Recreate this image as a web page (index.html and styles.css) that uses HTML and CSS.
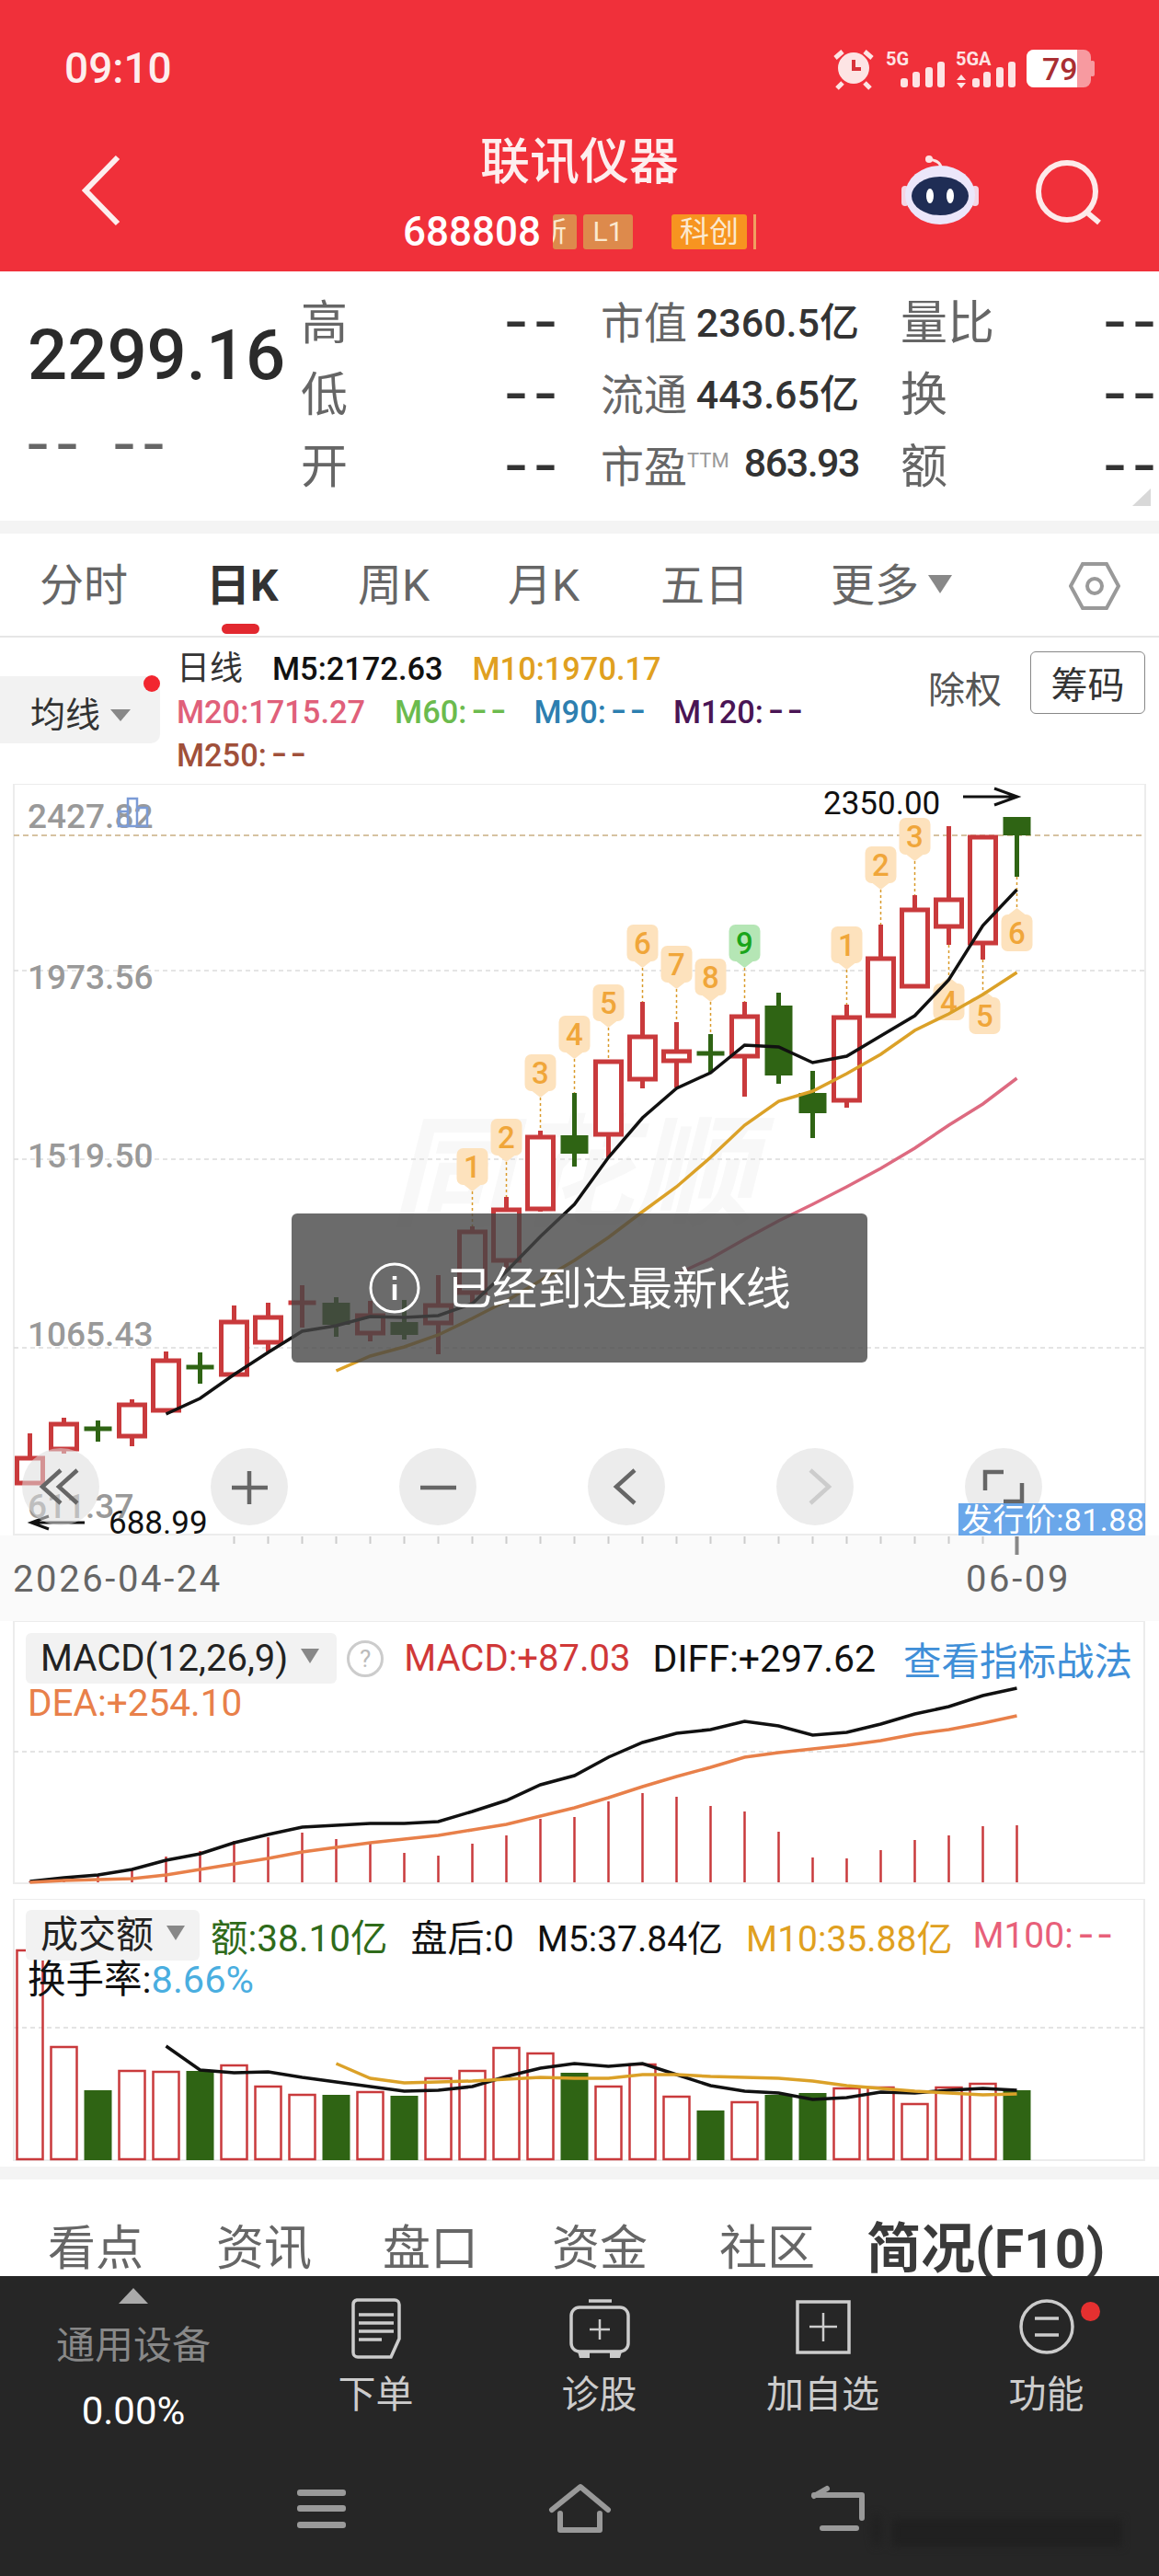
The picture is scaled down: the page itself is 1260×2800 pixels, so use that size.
FILE: index.html
```html
<!DOCTYPE html>
<html lang="zh-CN">

<head>
    <meta charset="UTF-8">
    <title>联讯仪器</title>
    <link rel="stylesheet" href="styles.css">
</head>

<body>
    <header class="top">
        <div class="status">
            <span class="clock">09:10</span>
            <svg class="status-icons" viewBox="900 40 300 70" width="300" height="70">
                <circle class="ic-pale" cx="928" cy="74" r="17"/>
                <path class="ic-line" d="M908 63l8-7M948 63l-8-7M916 90l-6 6M940 90l6 6"/>
                <path class="ic-red" d="M928 65v10h8"/>
                <text class="net" x="963" y="71">5G</text>
                <rect class="ic-pale" x="979" y="85" width="8" height="10" rx="3"/>
                <rect class="ic-pale" x="992" y="78" width="8" height="17" rx="3"/>
                <rect class="ic-pale" x="1006" y="73" width="8" height="22" rx="3"/>
                <rect class="ic-pale" x="1019" y="67" width="8" height="28" rx="3"/>
                <text class="net" x="1039" y="71">5GA</text>
                <path class="ic-pale" d="M1045 81l5 6h-10zM1045 96l5-6h-10z"/>
                <rect class="ic-pale" x="1057" y="85" width="8" height="10" rx="3"/>
                <rect class="ic-pale" x="1069" y="78" width="8" height="17" rx="3"/>
                <rect class="ic-pale" x="1083" y="73" width="8" height="22" rx="3"/>
                <rect class="ic-pale" x="1096" y="67" width="8" height="28" rx="3"/>
                <rect class="bat-back" x="1116" y="54" width="70" height="41" rx="8"/>
                <rect class="bat-back" x="1185" y="66" width="5" height="17" rx="2"/>
                <path class="bat-fill" d="M1124 54h47v41h-47a8 8 0 0 1-8-8v-25a8 8 0 0 1 8-8z"/>
                <text class="bat-num" x="1133" y="87">79</text>
            </svg>
        </div>
        <div class="titlebar">
            <svg class="back" viewBox="0 0 50 80" width="50" height="80">
                <path d="M43 4L8 40l35 36"/>
            </svg>
            <div class="name">
                <h1>联讯仪器</h1>
                <div class="code-row">
                    <span class="code">688808</span>
                    <span class="chip chip-cut">所</span>
                    <span class="chip chip-l1">L1</span>
                    <span class="chip chip-kc">科创</span>
                    <span class="chip-sliver"></span>
                </div>
            </div>
            <svg class="actions" viewBox="975 165 230 85" width="230" height="85">
                <path class="antenna" d="M1010 173c7 1 12 3 13 9"/>
                <circle class="ic-pale" cx="1010" cy="173" r="4"/>
                <rect class="robot-ear" x="980" y="202" width="8" height="22" rx="4"/>
                <rect class="robot-ear" x="1056" y="202" width="8" height="22" rx="4"/>
                <ellipse class="robot-head" cx="1022" cy="212" rx="38" ry="32"/>
                <ellipse class="robot-face" cx="1022" cy="213" rx="31" ry="21"/>
                <ellipse class="robot-eye" cx="1011" cy="213" rx="4" ry="8"/>
                <ellipse class="robot-eye" cx="1033" cy="213" rx="4" ry="8"/>
                <circle class="search" cx="1160" cy="208" r="31"/>
                <path class="search" d="M1183 232l12 10"/>
            </svg>
        </div>
    </header>

    <section class="quote">
        <div class="price-col">
            <div class="price">2299.16</div>
            <div class="change"><span class="dash">--</span><span class="dash">--</span></div>
        </div>
        <div class="q-col col-a">
            <div class="q-row"><span class="lbl big">高</span><span class="dash">--</span></div>
            <div class="q-row"><span class="lbl big">低</span><span class="dash">--</span></div>
            <div class="q-row"><span class="lbl big">开</span><span class="dash">--</span></div>
        </div>
        <div class="q-col col-b">
            <div class="q-row"><span class="lbl">市值</span><b>2360.5亿</b></div>
            <div class="q-row"><span class="lbl">流通</span><b>443.65亿</b></div>
            <div class="q-row"><span class="lbl">市盈<sup>TTM</sup></span><b class="tight">863.93</b></div>
        </div>
        <div class="q-col col-c">
            <div class="q-row"><span class="lbl big">量比</span><span class="dash">--</span></div>
            <div class="q-row"><span class="lbl big">换</span><span class="dash">--</span></div>
            <div class="q-row"><span class="lbl big">额</span><span class="dash">--</span></div>
        </div>
        <span class="corner"></span>
    </section>

    <div class="band"></div>

    <nav class="periods">
        <a>分时</a>
        <a class="on">日K</a>
        <a>周K</a>
        <a>月K</a>
        <a>五日</a>
        <a class="more">更多<i class="tri"></i></a>
        <svg class="hex" viewBox="0 0 56 54" width="56" height="54">
            <path d="M15 3h26l13 24-13 24H15L2 27z"/>
            <circle cx="28" cy="27" r="8"/>
        </svg>
    </nav>

    <section class="legend">
        <div class="ma-chip">均线<i class="tri"></i><span class="dot"></span></div>
        <div class="ma-lines">
            <div class="ma-row"><span class="c-dark big-name">日线</span><span class="c-black">M5:2172.63</span><span class="c-m10">M10:1970.17</span></div>
            <div class="ma-row"><span class="c-m20">M20:1715.27</span><span class="c-m60">M60:<span class="d">--</span></span><span class="c-m90">M90:<span class="d">--</span></span><span class="c-m120">M120:<span class="d">--</span></span></div>
            <div class="ma-row"><span class="c-m250">M250:<span class="d">--</span></span></div>
        </div>
        <div class="adjust">
            <span class="fq">除权</span>
            <button class="chips-btn">筹码</button>
        </div>
    </section>

    <section class="kline">
        <svg id="kchart" class="chart" viewBox="0 852 1260 838" width="1260" height="838">
            <text class="wm" x="424" y="1322">同花顺</text>
            <g id="kgrid"></g>
            <text class="axis" x="30" y="900">2427.82</text>
            <text class="axis" x="30" y="1075">1973.56</text>
            <text class="axis" x="30" y="1269">1519.50</text>
            <text class="axis" x="30" y="1463">1065.43</text>
            <text class="axis" x="30" y="1650">611.37</text>
            <path class="mini" d="M129 882h10v16h-10zM139 868h10v30h-10zM149 878h11v20h-11z"/>
            <g id="kcandles"></g>
            <text class="hl" x="895" y="885">2350.00</text>
            <path class="hl-arrow" d="M1047 866h59M1081 857l25 9-25 9"/>
            <text class="hl" x="118" y="1667">688.99</text>
            <path class="hl-arrow" d="M34 1655h58M53 1648l-19 7 19 7"/>
            <g class="btns">
                <circle cx="66" cy="1616" r="42"/>
                <circle cx="271" cy="1616" r="42"/>
                <circle cx="476" cy="1616" r="42"/>
                <circle cx="681" cy="1616" r="42"/>
                <circle cx="886" cy="1616" r="42"/>
                <circle cx="1091" cy="1616" r="42"/>
            </g>
            <path class="btn-ic" d="M66 1598l-20 18 20 18M84 1598l-20 18 20 18"/>
            <path class="btn-ic" d="M252 1617h39M271 1599v36"/>
            <path class="btn-ic" d="M457 1617h39"/>
            <path class="btn-ic" d="M690 1598l-20 18 20 18"/>
            <path class="btn-ic faint" d="M881 1598l20 18-20 18"/>
            <path class="btn-ic" d="M1071 1620v-20h20M1111 1612v20h-20"/>
            <rect class="issue-bg" x="1042" y="1634" width="203" height="35"/>
            <text class="issue" x="1045" y="1664">发行价:81.88</text>
        </svg>
        <div class="toast">
            <svg viewBox="0 0 56 56" width="56" height="56">
                <circle cx="28" cy="28" r="26"/>
                <path d="M28 24v17M28 15v4"/>
            </svg>
            <span>已经到达最新K线</span>
        </div>
    </section>

    <div class="dates"><span>2026-04-24</span><span>06-09</span></div>

    <section class="panel macd">
        <svg id="mchart" class="chart under" viewBox="0 1762 1260 286" width="1260" height="286"></svg>
        <div class="p-row">
            <div class="p-chip">MACD(12,26,9)<i class="tri"></i></div>
            <span class="help">?</span>
            <span class="c-red m1">MACD:+87.03</span>
            <span class="c-black m2">DIFF:+297.62</span>
            <a class="c-blue m3">查看指标战法</a>
        </div>
        <div class="p-line c-dea">DEA:+254.10</div>
    </section>

    <section class="panel vol">
        <svg id="vchart" class="chart under" viewBox="0 2064 1260 285" width="1260" height="285"></svg>
        <div class="p-row">
            <div class="p-chip">成交额<i class="tri"></i></div>
            <span class="c-green v1">额:38.10亿</span>
            <span class="c-black v2">盘后:0</span>
            <span class="c-black v2 small">M5:37.84亿</span>
            <span class="c-m10 v2 small">M10:35.88亿</span>
            <span class="c-m100 v3 small">M100:<span class="d">--</span></span>
        </div>
        <div class="p-line turnover c-black">换手率:<span class="c-sky">8.66%</span></div>
    </section>

    <div class="band band2"></div>

    <nav class="details">
        <a>看点</a>
        <a>资讯</a>
        <a>盘口</a>
        <a>资金</a>
        <a>社区</a>
        <a class="on">简况(F10)</a>
    </nav>

    <footer class="dock">
        <div class="dock-row">
            <div class="sector">
                <i class="up"></i>
                <span class="sector-name">通用设备</span>
                <span class="sector-pct">0.00%</span>
            </div>
            <div class="tool">
                <svg viewBox="0 0 56 66" width="56" height="66">
                    <path d="M7 2h41a5 5 0 0 1 5 5v37l-9 20H8a5 5 0 0 1-5-5V7a5 5 0 0 1 4-5z"/>
                    <path d="M9 18h38M9 27h38M9 36h38M9 45h25"/>
                </svg>
                <span>下单</span>
            </div>
            <div class="tool">
                <svg viewBox="0 0 66 66" width="66" height="66">
                    <path d="M21 3h25"/>
                    <rect x="2" y="10" width="62" height="48" rx="9"/>
                    <path class="thin" d="M33 23v22M22 34h22"/>
                    <path class="feet" d="M9 58h13v7H11zM44 58h13l-2 7H44z"/>
                </svg>
                <span>诊股</span>
            </div>
            <div class="tool">
                <svg viewBox="0 0 60 66" width="60" height="66">
                    <rect x="2" y="4" width="56" height="55"/>
                    <path class="thin" d="M30 16v31M15 31h30"/>
                </svg>
                <span>加自选</span>
            </div>
            <div class="tool">
                <svg viewBox="0 0 60 66" width="60" height="66">
                    <circle cx="30" cy="31" r="28"/>
                    <path d="M17 22h26M17 40h26"/>
                </svg>
                <span>功能</span>
                <i class="red-dot"></i>
            </div>
        </div>
        <svg class="sysbar" viewBox="0 2690 1260 110" width="1260" height="110">
            <rect x="323" y="2706" width="53" height="7" rx="3"/>
            <rect x="323" y="2723" width="53" height="7" rx="3"/>
            <rect x="323" y="2741" width="53" height="7" rx="3"/>
            <path d="M600 2728l31-25 30 25M609 2732v18h43v-18"/>
            <path d="M899 2705l-14 8M885 2712h52v25M894 2748h37"/>
            <g class="smudge">
                <ellipse cx="953" cy="2750" rx="5" ry="18"/>
                <rect x="970" y="2738" width="250" height="30"/>
            </g>
        </svg>
    </footer>

    <script src="script.js"></script>
</body>

</html>
```

FILE: styles.css
```css
* {
    margin: 0;
    box-sizing: border-box;
}

body {
    width: 1260px;
    overflow-x: hidden;
    background: #fff;
    font-family: Roboto, "Noto Sans CJK SC", sans-serif;
    color: #333;
}

/* header */

.top {
    height: 295px;
    background: #f0303a;
    color: #fff;
}

.status {
    height: 130px;
    display: flex;
    justify-content: space-between;
    padding: 40px 60px 0 70px;
}

.clock {
    font-size: 46px;
    font-weight: 500;
    line-height: 54px;
    margin-top: 7px;
    color: #fdeeee;
}

.ic-pale {
    fill: #fde4e4;
}

.ic-line {
    fill: none;
    stroke: #fde4e4;
    stroke-width: 5;
}

.ic-red {
    fill: none;
    stroke: #d8333a;
    stroke-width: 4;
}

.net {
    font-size: 20px;
    font-weight: 700;
    fill: #fde4e4;
}

.bat-back {
    fill: #f79aa0;
}

.bat-fill {
    fill: #fff;
}

.bat-num {
    font-size: 34px;
    font-weight: 500;
    fill: #a92e32;
}

.titlebar {
    height: 165px;
    display: flex;
    position: relative;
    justify-content: center;
}

.back {
    position: absolute;
    left: 85px;
    top: 37px;
    fill: none;
    stroke: #fdeeee;
    stroke-width: 6;
}

.actions {
    position: absolute;
    left: 975px;
    top: 35px;
}

.antenna {
    fill: none;
    stroke: #fde4e4;
    stroke-width: 3;
}

.robot-ear {
    fill: #f4d5e4;
}

.robot-head {
    fill: #ebe6fa;
}

.robot-face {
    fill: #1f2d55;
}

.robot-eye {
    fill: #fff;
}

.search {
    fill: none;
    stroke: #fdeaea;
    stroke-width: 6;
}

.name {
    text-align: center;
}

h1 {
    font-size: 54px;
    font-weight: 500;
    line-height: 72px;
    margin-top: 11px;
    color: #fdeeee;
}

.code-row {
    display: flex;
    align-items: center;
    margin-top: 19px;
}

.code {
    font-size: 44px;
    font-weight: 500;
    line-height: 40px;
    width: 163px;
    text-align: left;
}

.chip {
    height: 38px;
    line-height: 38px;
    border-radius: 3px;
    text-align: center;
    color: #fbe9d0;
    overflow: hidden;
}

.chip-cut {
    width: 26px;
    background: #dd8a4c;
    font-size: 30px;
    text-align: left;
    text-indent: -15px;
}

.chip-l1 {
    width: 54px;
    margin-left: 7px;
    background: #dd8a4c;
    font-size: 30px;
}

.chip-kc {
    width: 82px;
    margin-left: 42px;
    background: #f79420;
    font-size: 32px;
}

.chip-sliver {
    width: 3px;
    height: 38px;
    margin-left: 7px;
    background: #f0a060;
}

/* quote block */

.quote {
    height: 271px;
    display: flex;
    position: relative;
    padding-top: 13px;
    overflow: hidden;
}

.price-col {
    width: 327px;
    flex: none;
    padding-left: 30px;
}

.price {
    font-size: 76px;
    font-weight: 500;
    line-height: 90px;
    margin-top: 33px;
    color: #2b2b2b;
}

.change {
    display: flex;
    gap: 30px;
    margin: 12px 0 0 -10px;
}

.dash {
    font-family: "Liberation Mono", monospace;
    font-size: 70px;
    line-height: 62px;
    letter-spacing: -10px;
    padding-top: 12px;
    color: #333;
    white-space: nowrap;
}

.change .dash {
    color: #666;
}

.q-row {
    height: 78px;
    display: flex;
    align-items: center;
    justify-content: space-between;
}

.col-a {
    width: 277px;
    flex: none;
}

.col-b {
    width: 281px;
    flex: none;
    margin-left: 49px;
}

.col-c {
    width: 276px;
    flex: none;
    margin-left: 45px;
}

.lbl {
    font-size: 47px;
    color: #666;
}

.lbl.big {
    font-size: 51px;
}

.lbl sup {
    font-size: 22px;
    color: #999;
    vertical-align: 16px;
    line-height: 0;
}

.q-row b {
    font-size: 43px;
    font-weight: 500;
    color: #333;
}

.q-row b.tight {
    letter-spacing: -1.5px;
}

.corner {
    position: absolute;
    left: 1231px;
    top: 236px;
    border-bottom: 19px solid #d8d8d8;
    border-left: 20px solid transparent;
}

.band {
    height: 14px;
    background: #f4f4f4;
}

/* period tabs */

.periods {
    height: 113px;
    display: grid;
    grid-template-columns: 181px 165px 163px 166px 185px 259px auto;
    align-items: center;
    padding: 3px 0 0 43px;
    border-bottom: 2px solid #e6e6e6;
    position: relative;
    font-size: 48px;
    color: #666;
}

.periods a {
    line-height: 60px;
}

.periods .on {
    font-weight: 700;
    color: #333;
    position: relative;
}

.periods .on::after {
    content: "";
    position: absolute;
    left: 17px;
    top: 71px;
    width: 41px;
    height: 11px;
    border-radius: 6px;
    background: #e2282f;
}

.tri {
    display: inline-block;
    border-left: 13px solid transparent;
    border-right: 13px solid transparent;
    border-top: 20px solid #888;
    margin-left: 10px;
    vertical-align: 8px;
}

.hex {
    fill: none;
    stroke: #999;
    stroke-width: 4;
}

/* ma legend */

.legend {
    height: 159px;
    display: flex;
    align-items: flex-start;
}

.ma-chip {
    width: 174px;
    height: 73px;
    margin-top: 42px;
    padding: 6px 0 0 33px;
    line-height: 73px;
    font-size: 38px;
    color: #333;
    background: #f2f2f2;
    border-radius: 0 10px 10px 0;
    position: relative;
}

.ma-chip .tri {
    border-left-width: 11px;
    border-right-width: 11px;
    border-top-width: 13px;
    margin-left: 11px;
    vertical-align: 6px;
}

.dot {
    position: absolute;
    right: 0;
    top: -1px;
    width: 18px;
    height: 18px;
    border-radius: 50%;
    background: #f2262f;
}

.ma-lines {
    margin-left: 18px;
    padding-top: 11px;
    font-size: 34.4px;
    font-weight: 500;
}

.ma-row {
    display: flex;
    gap: 32px;
    height: 47px;
    line-height: 47px;
}

.big-name {
    font-size: 36px;
    font-weight: 400;
}

.d {
    font-family: "Liberation Mono", monospace;
    font-size: 46px;
    letter-spacing: -7px;
    line-height: 0;
}

.c-dark { color: #333; }
.c-black { color: #111; }
.c-m10 { color: #e0a020; }
.c-m20 { color: #e0607a; }
.c-m60 { color: #6cbb4e; }
.c-m90 { color: #2d7fb0; }
.c-m120 { color: #4a1555; }
.c-m250 { color: #a0503a; }
.c-m100 { color: #e8607a; }
.c-red { color: #d03838; }
.c-blue { color: #3f8fd8; }
.c-dea { color: #e8804a; }
.c-green { color: #2f6b1a; }
.c-sky { color: #4aaee0; }

.adjust {
    margin-left: auto;
    margin-right: 15px;
    margin-top: 15px;
    display: flex;
    align-items: center;
    gap: 31px;
}

.fq {
    font-size: 40px;
    color: #555;
    padding-top: 10px;
}

.chips-btn {
    width: 125px;
    height: 68px;
    background: #fff;
    border: 1px solid #888;
    border-radius: 6px;
    font-family: inherit;
    font-size: 40px;
    color: #333;
    padding: 0;
}

/* candle chart */

.kline {
    position: relative;
    height: 838px;
}

.chart {
    display: block;
}

.wm {
    font-size: 132px;
    font-weight: 700;
    font-style: italic;
    fill: #f8f8f8;
}

.frame {
    fill: none;
    stroke: #ececec;
    stroke-width: 2;
}

.tickband {
    fill: #fafafa;
}

.grid {
    stroke: #dcdcdc;
    stroke-width: 1.5;
    stroke-dasharray: 5 4;
}

.grid-top {
    stroke: #c9ae82;
    stroke-width: 1.5;
    stroke-dasharray: 6 4;
}

.axis {
    font-size: 37px;
    font-weight: 500;
    fill: #999;
}

.mini {
    fill: none;
    stroke: #7b9bd6;
    stroke-width: 2.5;
}

.body-up {
    fill: #fff;
    stroke: #c93a3c;
    stroke-width: 5;
}

.wick-up {
    stroke: #c93a3c;
    stroke-width: 5;
}

.body-down {
    fill: #2f6414;
}

.wick-down {
    stroke: #2f6414;
    stroke-width: 5;
}

.ma5 {
    fill: none;
    stroke: #111;
    stroke-width: 3.5;
}

.ma10 {
    fill: none;
    stroke: #dba128;
    stroke-width: 3.5;
}

.ma20 {
    fill: none;
    stroke: #dd6a80;
    stroke-width: 3.5;
}

.td-line {
    stroke: #d99a2b;
    stroke-width: 1.5;
    stroke-dasharray: 3 3;
}

.td {
    fill: #fde2bd;
}

.td-num {
    font-size: 33px;
    font-weight: 500;
    fill: #f0a63a;
    text-anchor: middle;
}

.td.green {
    fill: #b5e6b5;
}

.td-num.green {
    fill: #1aa51a;
}

.hl {
    font-size: 35px;
    fill: #111;
}

.hl-arrow {
    fill: none;
    stroke: #111;
    stroke-width: 3;
}

.btns {
    fill: #dcdcdc;
    fill-opacity: .55;
}

.btn-ic {
    fill: none;
    stroke: #666;
    stroke-width: 4.5;
}

.btn-ic.faint {
    stroke: #ccc;
}

.issue-bg {
    fill: #5d9fe8;
    fill-opacity: .92;
}

.issue {
    font-size: 34px;
    letter-spacing: .4px;
    fill: #fff;
}

.tick {
    stroke: #ccc;
    stroke-width: 2;
}

.tick-last {
    stroke: #888;
    stroke-width: 4;
}

.toast {
    position: absolute;
    left: 317px;
    top: 467px;
    width: 626px;
    height: 162px;
    display: flex;
    align-items: center;
    gap: 29px;
    padding-left: 84px;
    background: rgba(70, 70, 70, .8);
    border-radius: 6px;
    font-size: 49px;
    color: #fff;
}

.toast span {
    margin-top: -8px;
}

.toast svg {
    fill: none;
    stroke: #fff;
    stroke-width: 3;
}

.toast path {
    stroke-width: 4.5;
}

.dates {
    height: 72px;
    display: flex;
    justify-content: space-between;
    padding: 0 96px 18px 14px;
    background: #fafafa;
    font-size: 40px;
    letter-spacing: 2.6px;
    line-height: 54px;
    color: #666;
}

/* indicator panels */

.panel {
    position: relative;
    font-size: 40px;
}

.macd {
    height: 285px;
    padding-top: 13px;
}

.vol {
    height: 284px;
    padding-top: 12px;
    margin-top: 17px;
}

.under {
    position: absolute;
    left: 0;
    top: 0;
}

.p-row {
    position: relative;
    display: flex;
    align-items: center;
    height: 55px;
    padding: 0 29px 0 28px;
    white-space: nowrap;
}

.p-chip {
    height: 55px;
    line-height: 55px;
    padding-left: 16px;
    padding-right: 16px;
    background: #f2f2f2;
    border-radius: 6px;
    font-size: 41px;
    color: #222;
}

.macd .p-chip {
    font-size: 40px;
    padding-right: 19px;
}

.p-chip .tri {
    border-left-width: 10px;
    border-right-width: 10px;
    border-top-width: 16px;
    margin-left: 14px;
    vertical-align: 8px;
}

.help {
    width: 40px;
    height: 40px;
    margin-left: 11px;
    border: 3px solid #ccc;
    border-radius: 50%;
    text-align: center;
    font-size: 26px;
    line-height: 34px;
    color: #bbb;
}

.m1 { margin-left: 22px; }
.m2 { margin-left: 24px; font-size: 41px; }
.m3 { margin-left: auto; font-size: 41.5px; }
.v1 { margin-left: 12px; font-size: 40.5px; }
.v2 { margin-left: 25px; }
.v3 { margin-left: 22px; }
.small { font-size: 39px; }

.p-line {
    position: relative;
    height: 42px;
    line-height: 42px;
    padding-left: 30px;
    white-space: nowrap;
}

.macd .p-line {
    font-size: 40.5px;
}

.turnover {
    font-size: 41.5px;
}

.band2 {
    margin-top: 7px;
}

/* detail tabs */

.details {
    height: 105px;
    display: grid;
    grid-template-columns: 183px 181px 184px 182px 160px auto;
    padding: 44px 0 0 52px;
    overflow: hidden;
    font-size: 52px;
    line-height: 64px;
    color: #666;
}

.details .on {
    font-size: 59px;
    font-weight: 700;
    color: #3a3a3a;
    white-space: nowrap;
}

/* bottom dock */

.dock {
    height: 326px;
    background: #262626;
}

.dock-row {
    height: 216px;
    display: grid;
    grid-template-columns: 287px repeat(4, 243px);
}

.sector {
    display: flex;
    flex-direction: column;
    align-items: center;
    width: 290px;
}

.up {
    margin-top: 13px;
    border-left: 16px solid transparent;
    border-right: 16px solid transparent;
    border-bottom: 17px solid #aaa;
}

.sector-name {
    margin-top: 21px;
    font-size: 42px;
    line-height: 50px;
    color: #888;
}

.sector-pct {
    margin-top: 20px;
    font-size: 42px;
    line-height: 52px;
    color: #fff;
}

.tool {
    position: relative;
    display: flex;
    flex-direction: column;
    align-items: center;
    padding-top: 24px;
    font-size: 41px;
    line-height: 48px;
    color: #ccc;
}

.tool svg {
    fill: none;
    stroke: #ccc;
    stroke-width: 3.5;
    margin-bottom: 15px;
}

.tool svg .thin {
    stroke-width: 2.5;
}

.tool svg .feet {
    fill: #ccc;
    stroke: none;
}

.red-dot {
    position: absolute;
    left: 159px;
    top: 28px;
    width: 21px;
    height: 21px;
    border-radius: 50%;
    background: #e53030;
}

.sysbar {
    display: block;
    fill: #999;
}

.sysbar path {
    fill: none;
    stroke: #999;
    stroke-width: 6;
    stroke-linecap: round;
    stroke-linejoin: round;
}

.smudge {
    fill: #202020;
    filter: blur(4px);
}
```

FILE: script.js
```js
const NS = "http://www.w3.org/2000/svg";
const x = i => 32.5 + 37 * i;

function el(parent, name, attrs, text) {
    const node = document.createElementNS(NS, name);
    for (const key in attrs) node.setAttribute(key, attrs[key]);
    if (text) node.textContent = text;
    parent.appendChild(node);
    return node;
}

function polyline(parent, cls, start, ys) {
    const pts = ys.map((y, n) => `${x(start + n)},${y}`).join(" ");
    el(parent, "polyline", { class: cls, points: pts });
}

// top, bottom, wick top, wick bottom, u = red / d = green / + = cross
const candles = [
    [1585, 1612, 1558, 1612, "u"], [1548, 1575, 1541, 1580, "u"], [1553, 1553, 1544, 1567, "d+"],
    [1527, 1561, 1521, 1572, "u"], [1479, 1533, 1469, 1533, "u"], [1486, 1486, 1470, 1504, "d+"],
    [1437, 1494, 1419, 1494, "u"], [1432, 1459, 1416, 1469, "u"], [1416, 1416, 1397, 1443, "u+"],
    [1416, 1440, 1410, 1453, "d"], [1430, 1449, 1414, 1458, "u"], [1437, 1451, 1413, 1456, "d"],
    [1419, 1438, 1386, 1472, "u"], [1339, 1405, 1333, 1417, "u"], [1315, 1370, 1301, 1382, "u"],
    [1236, 1314, 1229, 1317, "u"], [1234, 1254, 1188, 1268, "d"], [1154, 1233, 1154, 1258, "u"],
    [1127, 1173, 1089, 1183, "u"], [1143, 1153, 1111, 1182, "u"], [1145, 1145, 1124, 1166, "d+"],
    [1105, 1148, 1089, 1192, "u"], [1093, 1169, 1079, 1178, "d"], [1188, 1210, 1164, 1237, "d"],
    [1106, 1196, 1092, 1204, "u"], [1042, 1104, 1005, 1104, "u"], [989, 1072, 973, 1072, "u"],
    [978, 1007, 898, 1027, "u"], [910, 1025, 910, 1043, "u"], [888, 908, 908, 953, "d"]
];

const ma5 = [1537, 1520, 1494, 1470, 1447, 1441, 1431, 1432, 1430, 1417, 1382, 1344, 1309, 1258, 1215, 1183, 1166, 1136, 1138, 1155, 1148, 1126, 1104, 1065, 1006, 967];
const ma10 = [1490, 1474, 1464, 1451, 1433, 1414, 1392, 1370, 1345, 1317, 1290, 1258, 1223, 1197, 1186, 1167, 1146, 1120, 1102, 1081, 1057];
const ma20 = [1385, 1368, 1347, 1327, 1309, 1290, 1270, 1248, 1223, 1200, 1172];

// candle, centre y, number; marks on the last candles hang below
const marks = [
    [13, 1268, 1], [14, 1236, 2], [15, 1166, 3], [16, 1124, 4], [17, 1090, 5], [18, 1025, 6],
    [19, 1048, 7], [20, 1062, 8], [21, 1025, 9], [24, 1027, 1], [25, 940, 2], [26, 909, 3],
    [27, 1089, 4, true], [28, 1104, 5, true], [29, 1014, 6, true]
];

function drawKline() {
    const grid = document.querySelector("#kgrid");
    el(grid, "rect", { class: "frame", x: 15, y: 852, width: 1230, height: 816 });
    el(grid, "rect", { class: "tickband", x: 0, y: 1669, width: 1260, height: 21 });
    [1055, 1260, 1465].forEach(y => el(grid, "line", { class: "grid", x1: 15, x2: 1245, y1: y, y2: y }));
    el(grid, "line", { class: "grid-top", x1: 15, x2: 1245, y1: 908, y2: 908 });
    for (let i = 6; i < 29; i++) {
        el(grid, "line", { class: "tick", x1: x(i), x2: x(i), y1: 1670, y2: 1678 });
    }
    el(grid, "line", { class: "tick-last", x1: x(29), x2: x(29), y1: 1670, y2: 1690 });

    const g = document.querySelector("#kcandles");

    marks.forEach(([i, cy, n, below]) => {
        const c = candles[i];
        const green = n == 9 ? " green" : "";
        const y1 = below ? c[3] : cy + 27;
        const y2 = below ? cy - 20 : c[2];
        el(g, "line", { class: "td-line", x1: x(i), x2: x(i), y1: y1, y2: y2 });
        const mx = x(i) + (i == 28 ? 2 : 0);
        const tip = below ? cy - 27 : cy + 27;
        const edge = below ? cy - 20 : cy + 20;
        el(g, "rect", { class: "td" + green, x: mx - 17, y: cy - 20, width: 34, height: 40, rx: 7 });
        el(g, "path", { class: "td" + green, d: `M${mx - 9} ${edge}L${mx} ${tip}L${mx + 9} ${edge}z` });
        el(g, "text", { class: "td-num" + green, x: mx, y: cy + 12 }, String(n));
    });

    candles.forEach((c, i) => {
        const up = c[4][0] == "u";
        const cross = c[4][1] == "+";
        el(g, "line", { class: up ? "wick-up" : "wick-down", x1: x(i), x2: x(i), y1: c[2], y2: c[3] });
        if (cross) {
            el(g, "line", { class: up ? "wick-up" : "wick-down", x1: x(i) - 15, x2: x(i) + 15, y1: c[0], y2: c[0] });
        } else if (up) {
            el(g, "rect", { class: "body-up", x: x(i) - 14, y: c[0], width: 28, height: c[1] - c[0] });
        } else {
            el(g, "rect", { class: "body-down", x: x(i) - 15, y: c[0], width: 30, height: c[1] - c[0] });
        }
    });

    polyline(g, "ma20", 19, ma20);
    polyline(g, "ma10", 9, ma10);
    polyline(g, "ma5", 4, ma5);
}

const bars = [2045, 2044, 2037, 2031, 2018, 2012, 2001, 1997, 1992, 1999, 2003, 2014, 2017, 2004, 1995, 1977, 1975, 1958, 1949, 1953, 1963, 1969, 1991, 2019, 2020, 2011, 2000, 1995, 1985, 1984];
const diff = [2045, 2041, 2038, 2032, 2022, 2015, 2003, 1994, 1986, 1984, 1982, 1982, 1980, 1969, 1957, 1940, 1930, 1910, 1894, 1884, 1880, 1871, 1876, 1886, 1883, 1874, 1863, 1855, 1843, 1835];
const dea = [2046, 2044, 2043, 2042, 2038, 2032, 2026, 2020, 2013, 2008, 2003, 1999, 1995, 1989, 1983, 1974, 1965, 1954, 1942, 1931, 1921, 1910, 1905, 1901, 1897, 1892, 1885, 1880, 1873, 1865];

function drawMacd() {
    const g = document.querySelector("#mchart");
    el(g, "rect", { class: "frame", x: 15, y: 1762, width: 1229, height: 285 });
    el(g, "line", { class: "grid", x1: 15, x2: 1244, y1: 1904, y2: 1904 });
    bars.forEach((y, i) => el(g, "line", { class: "wick-up", x1: x(i), x2: x(i), y1: y, y2: 2046, style: "stroke-width:2.5" }));
    polyline(g, "ma5", 0, diff);
    el(g, "polyline", { class: "ma10", style: "stroke:#e8804a", points: dea.map((y, i) => `${x(i)},${y}`).join(" ") });
}

// top of bar, g = green
const volume = [
    [2120], [2225], [2272, "g"], [2251], [2252], [2251, "g"], [2245], [2268], [2277], [2277, "g"],
    [2274], [2278, "g"], [2259], [2251], [2226], [2232], [2253, "g"], [2268], [2244], [2279],
    [2294, "g"], [2285], [2277, "g"], [2275, "g"], [2270], [2269], [2287], [2269], [2265], [2272, "g"]
];
const volM5 = [2224, 2250, 2253, 2252, 2258, 2263, 2268, 2273, 2272, 2268, 2257, 2248, 2243, 2246, 2243, 2255, 2267, 2273, 2275, 2282, 2280, 2274, 2275, 2272, 2270, 2272];
const volM10 = [2243, 2259, 2264, 2263, 2262, 2260, 2258, 2259, 2259, 2255, 2255, 2257, 2258, 2259, 2262, 2267, 2270, 2273, 2275, 2277, 2276];

function drawVolume() {
    const g = document.querySelector("#vchart");
    el(g, "rect", { class: "frame", x: 15, y: 2064, width: 1229, height: 284 });
    el(g, "line", { class: "grid", x1: 15, x2: 1244, y1: 2204, y2: 2204 });
    volume.forEach(([top, dir], i) => {
        if (dir) {
            el(g, "rect", { class: "body-down", x: x(i) - 15, y: top, width: 30, height: 2348 - top });
        } else {
            el(g, "rect", { class: "body-up", style: "fill:none;stroke-width:2.5", x: x(i) - 14, y: top, width: 28, height: 2347 - top });
        }
    });
    polyline(g, "ma5", 4, volM5);
    polyline(g, "ma10", 9, volM10);
}

drawKline();
drawMacd();
drawVolume();
```
